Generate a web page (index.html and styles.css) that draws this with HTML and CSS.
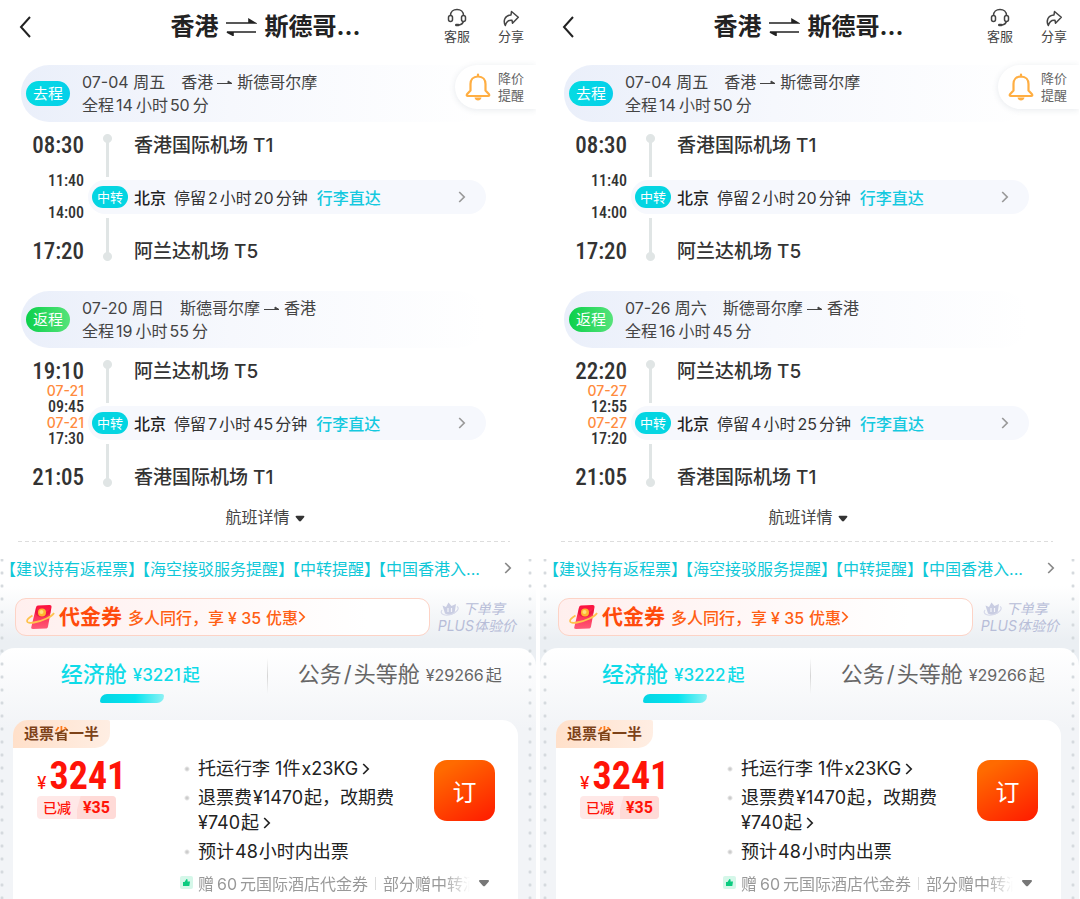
FILE: index.html
```html
<!DOCTYPE html>
<html lang="zh-CN">
<head>
  <meta charset="UTF-8">
  <meta name="viewport" content="width=device-width, initial-scale=1.0">
  <title>香港 - 斯德哥尔摩 往返航班</title>
  <link rel="stylesheet" href="styles.css">
</head>
<body>
  <!-- Shared icons -->
  <svg class="sprite" aria-hidden="true">
    <defs>
      <linearGradient id="packet" x1="0" y1="0" x2="0" y2="1">
        <stop offset="0" stop-color="#fb0f3c"/>
        <stop offset="1" stop-color="#ff5a78"/>
      </linearGradient>
    </defs>
    <symbol id="i-back" viewBox="0 0 12 22"><path d="M11 1 2 11l9 10" fill="none" stroke="#222" stroke-width="2"/></symbol>
    <symbol id="i-swap" viewBox="0 0 32 18"><path d="M1 5h29L24 1.500V5M31 14H2l6 3.300V14" fill="#222" stroke="#222" stroke-width="1.600"/></symbol>
    <symbol id="i-to" viewBox="0 0 16 8"><path d="M0 4.500h15l-4-2.500v2.500" fill="#444" stroke="#444" stroke-width="1"/></symbol>
    <symbol id="i-service" viewBox="0 0 20 19">
      <path d="M3.500 7.500C3.500 3.800 6.300 1.500 10 1.500s6.500 2.300 6.500 6M16.500 13c-.5 2.300-2 3.700-4.500 4" fill="none" stroke="#444" stroke-width="1.500"/>
      <rect x="1.500" y="7.500" width="4" height="6" rx="2" fill="#fff" stroke="#444" stroke-width="1.500"/>
      <rect x="14.500" y="7.500" width="4" height="6" rx="2" fill="#fff" stroke="#444" stroke-width="1.500"/>
      <rect x="8" y="15.800" width="4.500" height="2.400" rx="1.200" fill="#444"/>
    </symbol>
    <symbol id="i-share" viewBox="0 0 18 17"><path d="M9.500 1.500 16.300 7.300 10.500 13.200 10 10.300C6.500 9.800 4.500 11.500 3.300 15.500 1 11 2.500 5.500 9 4.900z" fill="none" stroke="#444" stroke-width="1.500" stroke-linejoin="round"/></symbol>
    <symbol id="i-bell" viewBox="0 0 26 30">
      <path d="M13 2.500v2M13 4.500c-5 0-7.500 3.500-7.500 7.500v6.500L2 22.300c-.6.900-.2 1.700.8 1.700h20.400c1 0 1.400-.8.8-1.700l-3.500-3.800V12c0-4-2.500-7.500-7.500-7.500z" fill="none" stroke="#ffae42" stroke-width="2.200" stroke-linecap="round" stroke-linejoin="round"/>
      <path d="M9.500 25.500h7c-.4 2-1.700 3-3.500 3s-3.100-1-3.500-3z" fill="#ffae42"/>
    </symbol>
    <symbol id="i-more" viewBox="0 0 8 12"><path d="m1.200 1 5 5-5 5" fill="none" stroke="currentColor" stroke-width="1.700"/></symbol>
    <symbol id="i-caret" viewBox="0 0 10 7"><path d="M1.500.8h7c.9 0 1.200.8.6 1.500L6 6c-.6.600-1.400.6-2 0L.9 2.300C.3 1.600.6.800 1.500.8z" fill="currentColor"/></symbol>
    <symbol id="i-coupon" viewBox="0 0 30 26">
      <path d="M12 1.500 23.500 1c1.500 0 2.200.8 2 2.200L22 22.500c-.3 1.400-1 2-2.300 2L7 25c-1.500 0-2.200-.8-1.600-2.200L10 3.500c.4-1.300.8-2 2-2z" fill="url(#packet)"/>
      <path d="M10 3.500c3 8 9 7 15 1L24.500 9C18 15 11 14 9 9z" fill="#d8002d" opacity=".4"/>
      <path d="M6.500 11.500C-1 16-1 20 8 18.500s18-6 20-9.500" fill="none" stroke="#ffc24d" stroke-width="1.800"/>
      <circle cx="16" cy="8.500" r="4" fill="#ffb52e"/>
      <circle cx="15.500" cy="8" r="2" fill="#ffe07a"/>
    </symbol>
    <symbol id="i-crown" viewBox="0 0 22 16">
      <path d="M3.500 4.500 7 6l2.500-4.500 3 3.500L17 3l-1.500 9.500c-3 1.800-7 1.800-9.500 0z" fill="#c9cde2"/>
      <path d="M3 9c-3 4 3 6.500 9 4.500s9-6.500 6-8" fill="none" stroke="#d6d9ea" stroke-width="1.200"/>
      <path d="M9 7v4M12.500 7v4" stroke="#f4f5fa" stroke-width="1.200"/>
    </symbol>
    <symbol id="i-thumb" viewBox="0 0 13 13">
      <rect width="13" height="13" rx="2" fill="#d5f7e9"/>
      <path d="M3 6h1.500L6.500 3c1 0 1.300.8 1 2.500H10L9.300 10H3z" fill="#0ccb80"/>
    </symbol>
  </svg>

  <main class="compare">
    <section class="panel">
      <header class="topbar">
        <button class="back" aria-label="返回"><svg><use href="#i-back"/></svg></button>
        <h1>香港<svg><use href="#i-swap"/></svg>斯德哥...</h1>
        <nav>
          <a href="#"><svg class="service"><use href="#i-service"/></svg>客服</a>
          <a href="#"><svg class="share"><use href="#i-share"/></svg>分享</a>
        </nav>
      </header>
      <button class="alert"><svg><use href="#i-bell"/></svg><span>降价<br>提醒</span></button>

      <article class="leg">
        <div class="leg-head">
          <span class="tag">去程</span>
          <div>
            <p>07-04 周五<span class="route">香港<svg><use href="#i-to"/></svg>斯德哥尔摩</span></p>
            <p>全程<i>14</i>小时<i>50</i>分</p>
          </div>
        </div>
        <div class="stops">
          <time class="from">08:30</time><h2 class="from">香港国际机场 T1</h2>
          <div class="via-times">
            <p><time>11:40</time></p>
            <p><time>14:00</time></p>
          </div>
          <button class="via"><span class="via-tag">中转</span><b>北京</b><span class="stay">停留<i>2</i>小时<i>20</i>分钟</span><em>行李直达</em><svg><use href="#i-more"/></svg></button>
          <time class="to">17:20</time><h2 class="to">阿兰达机场 T5</h2>
          <div class="rail"><span></span><span></span></div>
        </div>
      </article>

      <article class="leg">
        <div class="leg-head">
          <span class="tag green">返程</span>
          <div>
            <p>07-20 周日<span class="route">斯德哥尔摩<svg><use href="#i-to"/></svg>香港</span></p>
            <p>全程<i>19</i>小时<i>55</i>分</p>
          </div>
        </div>
        <div class="stops">
          <time class="from">19:10</time><h2 class="from">阿兰达机场 T5</h2>
          <div class="via-times">
            <p><span>07-21</span><time>09:45</time></p>
            <p><span>07-21</span><time>17:30</time></p>
          </div>
          <button class="via"><span class="via-tag">中转</span><b>北京</b><span class="stay">停留<i>7</i>小时<i>45</i>分钟</span><em>行李直达</em><svg><use href="#i-more"/></svg></button>
          <time class="to">21:05</time><h2 class="to">香港国际机场 T1</h2>
          <div class="rail"><span></span><span></span></div>
        </div>
      </article>

      <button class="detail">航班详情<svg><use href="#i-caret"/></svg></button>

      <div class="fares">
        <a class="notice" href="#"><p><span>【建议持有返程票】</span><span>【海空接驳服务提醒】</span><span>【中转提醒】</span><span>【中国香港入...</span></p><svg><use href="#i-more"/></svg></a>
        <div class="promo">
          <a class="coupon" href="#"><svg class="packet"><use href="#i-coupon"/></svg><strong>代金券</strong><span>多人同行，享<i>¥ 35</i>优惠</span><svg class="more"><use href="#i-more"/></svg></a>
          <p class="plus"><svg><use href="#i-crown"/></svg>下单享<br>PLUS体验价</p>
        </div>
        <div class="cabins">
          <div class="tabs">
            <button class="active">经济舱<small>¥3221<i>起</i></small></button>
            <button>公务<i>/</i>头等舱<small>¥29266<i>起</i></small></button>
          </div>
          <div class="offer">
            <span class="ribbon">退票<span>省</span>一半</span>
            <div class="offer-body">
              <div class="price">
                <p><small>¥</small>3241</p>
                <div class="cut"><span>已减</span><b>¥35</b></div>
              </div>
              <ul>
                <li>托运行李 1件<i>x23KG</i><svg><use href="#i-more"/></svg></li>
                <li>退票费<i>¥1470</i>起，改期费<br>¥740<i>起</i><svg><use href="#i-more"/></svg></li>
                <li>预计<i>48</i>小时内出票</li>
              </ul>
              <button class="book">订</button>
            </div>
            <div class="gift">
              <svg class="thumb"><use href="#i-thumb"/></svg>
              <p>赠<i>60</i>元国际酒店代金券<span class="bar"></span>部分赠中转酒店</p>
              <svg class="caret"><use href="#i-caret"/></svg>
            </div>
          </div>
        </div>
      </div>
    </section>

    <section class="panel">
      <header class="topbar">
        <button class="back" aria-label="返回"><svg><use href="#i-back"/></svg></button>
        <h1>香港<svg><use href="#i-swap"/></svg>斯德哥...</h1>
        <nav>
          <a href="#"><svg class="service"><use href="#i-service"/></svg>客服</a>
          <a href="#"><svg class="share"><use href="#i-share"/></svg>分享</a>
        </nav>
      </header>
      <button class="alert"><svg><use href="#i-bell"/></svg><span>降价<br>提醒</span></button>

      <article class="leg">
        <div class="leg-head">
          <span class="tag">去程</span>
          <div>
            <p>07-04 周五<span class="route">香港<svg><use href="#i-to"/></svg>斯德哥尔摩</span></p>
            <p>全程<i>14</i>小时<i>50</i>分</p>
          </div>
        </div>
        <div class="stops">
          <time class="from">08:30</time><h2 class="from">香港国际机场 T1</h2>
          <div class="via-times">
            <p><time>11:40</time></p>
            <p><time>14:00</time></p>
          </div>
          <button class="via"><span class="via-tag">中转</span><b>北京</b><span class="stay">停留<i>2</i>小时<i>20</i>分钟</span><em>行李直达</em><svg><use href="#i-more"/></svg></button>
          <time class="to">17:20</time><h2 class="to">阿兰达机场 T5</h2>
          <div class="rail"><span></span><span></span></div>
        </div>
      </article>

      <article class="leg">
        <div class="leg-head">
          <span class="tag green">返程</span>
          <div>
            <p>07-26 周六<span class="route">斯德哥尔摩<svg><use href="#i-to"/></svg>香港</span></p>
            <p>全程<i>16</i>小时<i>45</i>分</p>
          </div>
        </div>
        <div class="stops">
          <time class="from">22:20</time><h2 class="from">阿兰达机场 T5</h2>
          <div class="via-times">
            <p><span>07-27</span><time>12:55</time></p>
            <p><span>07-27</span><time>17:20</time></p>
          </div>
          <button class="via"><span class="via-tag">中转</span><b>北京</b><span class="stay">停留<i>4</i>小时<i>25</i>分钟</span><em>行李直达</em><svg><use href="#i-more"/></svg></button>
          <time class="to">21:05</time><h2 class="to">香港国际机场 T1</h2>
          <div class="rail"><span></span><span></span></div>
        </div>
      </article>

      <button class="detail">航班详情<svg><use href="#i-caret"/></svg></button>

      <div class="fares">
        <a class="notice" href="#"><p><span>【建议持有返程票】</span><span>【海空接驳服务提醒】</span><span>【中转提醒】</span><span>【中国香港入...</span></p><svg><use href="#i-more"/></svg></a>
        <div class="promo">
          <a class="coupon" href="#"><svg class="packet"><use href="#i-coupon"/></svg><strong>代金券</strong><span>多人同行，享<i>¥ 35</i>优惠</span><svg class="more"><use href="#i-more"/></svg></a>
          <p class="plus"><svg><use href="#i-crown"/></svg>下单享<br>PLUS体验价</p>
        </div>
        <div class="cabins">
          <div class="tabs">
            <button class="active">经济舱<small>¥3222<i>起</i></small></button>
            <button>公务<i>/</i>头等舱<small>¥29266<i>起</i></small></button>
          </div>
          <div class="offer">
            <span class="ribbon">退票<span>省</span>一半</span>
            <div class="offer-body">
              <div class="price">
                <p><small>¥</small>3241</p>
                <div class="cut"><span>已减</span><b>¥35</b></div>
              </div>
              <ul>
                <li>托运行李 1件<i>x23KG</i><svg><use href="#i-more"/></svg></li>
                <li>退票费<i>¥1470</i>起，改期费<br>¥740<i>起</i><svg><use href="#i-more"/></svg></li>
                <li>预计<i>48</i>小时内出票</li>
              </ul>
              <button class="book">订</button>
            </div>
            <div class="gift">
              <svg class="thumb"><use href="#i-thumb"/></svg>
              <p>赠<i>60</i>元国际酒店代金券<span class="bar"></span>部分赠中转酒店</p>
              <svg class="caret"><use href="#i-caret"/></svg>
            </div>
          </div>
        </div>
      </div>
    </section>
  </main>
</body>
</html>
```
FILE: styles.css
```css
* {
  box-sizing: border-box;
}

body {
  margin: 0;
  background: #fff;
  color: #333;
  font-family: Inter, "Noto Sans CJK SC", sans-serif;
  font-size: 16px;
  overflow-x: hidden;
}

h1, h2, p, ul {
  margin: 0;
  padding: 0;
}

button {
  border: none;
  background: none;
  padding: 0;
  font: inherit;
  color: inherit;
  cursor: pointer;
}

a {
  color: inherit;
  text-decoration: none;
}

em {
  font-style: normal;
}

/* small gap between digits and Chinese text */
i {
  font-style: normal;
  margin: 0 2px;
}

.sprite {
  position: absolute;
  width: 0;
  height: 0;
}

.compare {
  display: grid;
  grid-template-columns: 1fr 1fr;
  gap: 4px;
  margin: 0 1px 0 -3px;
  min-height: 100vh;
}

.panel {
  position: relative;
  display: flex;
  flex-direction: column;
  min-width: 0;
  overflow: hidden;
}

/* Top bar */
.topbar {
  display: flex;
  align-items: center;
  height: 65px;
  padding: 0 12px 12px 22px;
}

.back svg {
  display: block;
  width: 12px;
  height: 22px;
}

.topbar h1 {
  flex: 1;
  display: flex;
  align-items: center;
  justify-content: center;
  padding-left: 56px;
  font-size: 24px;
  line-height: 36px;
  color: #222;
}

.topbar h1 svg {
  width: 32px;
  height: 18px;
  margin: 0 7px;
}

.topbar nav {
  display: flex;
  gap: 28px;
}

.topbar nav a {
  display: flex;
  flex-direction: column;
  align-items: center;
  font-size: 13px;
  line-height: 18px;
  color: #444;
}

.service {
  width: 20px;
  height: 19px;
}

.share {
  width: 18px;
  height: 17px;
  margin-top: 2px;
}

.alert {
  position: absolute;
  top: 65px;
  right: 0;
  display: flex;
  align-items: center;
  gap: 7px;
  height: 44px;
  padding: 0 12px 0 10px;
  border-radius: 22px 0 0 22px;
  background: #fff;
  box-shadow: 0 1px 6px rgba(60, 80, 110, 0.12);
  font-size: 13px;
  line-height: 17px;
  color: #666;
}

.alert svg {
  width: 26px;
  height: 30px;
}

/* Flight legs */
.leg {
  margin-bottom: 15px;
}

.leg + .leg {
  margin-bottom: 0;
}

.leg-head {
  display: flex;
  align-items: center;
  gap: 12px;
  height: 57px;
  margin: 0 50px 0 24px;
  padding-left: 5px;
  border-radius: 28px;
  background: linear-gradient(90deg, #eaeffa, #f6f8fd 45%, #fff);
  line-height: 23px;
  color: #444;
}

.leg-head i {
  margin: 0 3px 0 2px;
}

.tag {
  padding: 0 7px;
  border-radius: 13px;
  background: linear-gradient(90deg, #04dbe2, #06cfea);
  color: #fff;
  font-size: 15px;
  line-height: 25px;
}

.tag.green {
  background: linear-gradient(90deg, #0cd04b, #56e37a);
}

.route {
  margin-left: 16px;
}

.route svg {
  width: 16px;
  height: 8px;
  margin: 0 4px;
  vertical-align: 1px;
}

.stops {
  display: grid;
  grid-template-columns: 87px 47px 1fr;
  grid-template-rows: 46px 58px 50px;
  align-items: center;
}

time {
  grid-column: 1;
  text-align: right;
  font-family: "Roboto Condensed", Roboto, sans-serif;
  font-size: 23px;
  font-weight: 500;
}

.stops h2 {
  grid-column: 3;
  padding: 2px 0 0 3px;
  font-size: 19px;
  font-weight: 500;
  line-height: 24px;
}

.from {
  grid-row: 1;
}

.to {
  grid-row: 3;
}

.via-times {
  grid-area: 2 / 1;
  align-self: start;
  margin: -11px 0;
}

.via-times p {
  display: flex;
  flex-direction: column;
  justify-content: flex-end;
  height: 32px;
  text-align: right;
  line-height: 16px;
}

.via-times span {
  color: #ff8b3d;
  font-size: 14px;
  font-weight: 500;
  line-height: 16px;
}

.via-times time {
  font-size: 16px;
}

.rail {
  grid-area: 1 / 2 / 4 / 3;
  align-self: stretch;
  display: flex;
  flex-direction: column;
  justify-content: space-between;
  align-items: center;
  padding: 12px 0 15px;
}

.rail span {
  width: 9px;
  height: 43px;
  background:
    radial-gradient(circle, #e0e5e5 4px, transparent 5px) top / 9px 9px no-repeat,
    linear-gradient(#e0e5e5, #e0e5e5) bottom / 3px 39px no-repeat;
}

.rail span:last-child {
  background-position: bottom, top;
}

.via {
  grid-area: 2 / 2 / 3 / 4;
  display: flex;
  align-items: center;
  height: 34px;
  margin: 0 50px 0 4px;
  padding: 0 20px 0 4px;
  border-radius: 17px;
  background: #f6f8fd;
}

.via-tag {
  padding: 0 5px;
  border-radius: 11px;
  background: #04d5e2;
  color: #fff;
  font-size: 13px;
  line-height: 22px;
}

.via b {
  margin: 0 8px 0 6px;
  font-weight: 500;
  color: #222;
}

.via em {
  flex: 1;
  margin-left: 9px;
  text-align: left;
  font-weight: 500;
  color: #14c9df;
}

.via svg {
  width: 8px;
  height: 12px;
  color: #999;
}

.detail {
  align-self: center;
  height: 30px;
  padding: 0 3px 2px 0;
  color: #444;
}

.detail svg {
  width: 10px;
  height: 7px;
  margin-left: 5px;
  vertical-align: 1px;
  color: #333;
}

/* Fares */
.fares {
  position: relative;
  flex: 1;
  display: flex;
  flex-direction: column;
  margin-top: 9px;
  background: linear-gradient(#fff 45px, #ebeff3 100px);
}

.fares::before {
  content: "";
  height: 1px;
  margin: 0 26px 0 21px;
  background: repeating-linear-gradient(90deg, #ddd 0 4px, transparent 4px 7px);
}

/* perforated edges */
.fares::after {
  content: "";
  position: absolute;
  inset: 18px 4px 0 3px;
  background:
    radial-gradient(circle, #d3d8dc 1px, transparent 2px) left / 4px 13px repeat-y,
    radial-gradient(circle, #d3d8dc 1px, transparent 2px) right / 4px 13px repeat-y;
  pointer-events: none;
}

.notice {
  display: flex;
  align-items: center;
  justify-content: space-between;
  height: 52px;
  padding: 0 24px 0 11px;
  color: #10c8d8;
}

.notice p {
  white-space: nowrap;
  font-feature-settings: "halt";
}

.notice span {
  margin-right: 6px;
}

.notice svg {
  width: 8px;
  height: 12px;
  color: #888;
}

.promo {
  display: flex;
  align-items: center;
  gap: 8px;
  margin: 4px 20px 12px 18px;
}

.coupon {
  flex: 1;
  display: flex;
  align-items: center;
  height: 38px;
  padding-left: 10px;
  border: 1px solid #fdd3c6;
  border-radius: 11px;
  background: linear-gradient(90deg, #ffefee, #fff 85%);
  font-weight: 500;
  color: #ff5f14;
}

.packet {
  width: 30px;
  height: 26px;
}

.coupon strong {
  margin: 0 6px 0 3px;
  font-size: 21px;
  line-height: 30px;
  color: #ff4b0c;
}

.coupon i {
  margin: 0 5px 0 4px;
}

.coupon .more {
  width: 8px;
  height: 14px;
}

.plus {
  font-size: 14px;
  font-style: italic;
  line-height: 17px;
  white-space: nowrap;
  color: #b7bdd8;
}

.plus svg {
  width: 22px;
  height: 16px;
  margin: 0 2px 0 1px;
  vertical-align: -3px;
}

.cabins {
  flex: 1;
  display: flex;
  flex-direction: column;
  border-radius: 18px 18px 0 0;
  background: linear-gradient(#fff, #f2f4f7 80px);
}

.tabs {
  display: grid;
  grid-template-columns: 1fr 1fr;
  height: 72px;
}

.tabs button {
  position: relative;
  height: 55px;
  padding: 0 3px 8px 0;
  font-size: 22px;
  white-space: nowrap;
  color: #666;
}

.tabs button + button::before {
  content: "";
  position: absolute;
  left: 0;
  top: 10px;
  width: 1px;
  height: 36px;
  background: linear-gradient(transparent, #d5d5d5, transparent);
}

.tabs small {
  margin-left: 6px;
  font-size: 16px;
  vertical-align: 1px;
}

.tabs small i {
  margin-right: 0;
}

.tabs .active {
  font-weight: 500;
  color: #0edbe8;
}

.active small {
  font-size: 17px;
}

.tabs .active::after {
  content: "";
  position: absolute;
  left: 50%;
  bottom: 0;
  width: 64px;
  height: 9px;
  margin-left: -32px;
  border-radius: 7px 2px 7px 2px;
  background: linear-gradient(90deg, #04d5e4, #06e4ef 55%, #8df1f4);
}

.offer {
  flex: 1;
  margin: 0 18px 0 16px;
  border-radius: 16px 16px 0 0;
  background: #fff;
}

.ribbon {
  display: block;
  width: fit-content;
  height: 28px;
  padding: 0 11px;
  border-radius: 15px 2px 15px 0;
  background: linear-gradient(90deg, #ffe0ca, #ffeee3);
  font-size: 15px;
  font-weight: bold;
  line-height: 28px;
  color: #7d4218;
}

.ribbon span {
  background: linear-gradient(165deg, #ff7a1a 34%, #7d4218 40%);
  background-clip: text;
  color: transparent;
}

.offer-body {
  display: flex;
  align-items: flex-start;
  padding: 8px 23px 0 24px;
}

.price {
  width: 147px;
  color: #ff1408;
}

.price p {
  font-family: "Roboto Condensed", Roboto, sans-serif;
  font-size: 38px;
  font-weight: bold;
  line-height: 40px;
}

.price small {
  margin-right: 3px;
  font-family: Inter, sans-serif;
  font-size: 17px;
  font-weight: 500;
  line-height: 1;
}

.cut {
  display: flex;
  width: fit-content;
  border-radius: 4px;
  overflow: hidden;
  background: #ffe8e7;
  font-size: 14px;
  line-height: 23px;
}

.cut span {
  padding: 0 6px;
  font-weight: 500;
}

.cut b {
  padding: 0 6px;
  background: linear-gradient(105deg, #ffe8e7 3px, #ffdad7 4px);
  font-family: Roboto, sans-serif;
  font-size: 16px;
}

.offer-body ul {
  flex: 1;
  list-style: none;
  font-size: 18px;
  line-height: 25px;
  white-space: nowrap;
  color: #222;
}

.offer-body li {
  margin-bottom: 4px;
  background: radial-gradient(circle, #ccc 1px, transparent 3px) 0 10px / 6px 6px no-repeat;
  padding-left: 14px;
}

.offer-body li i {
  margin: 0 1px;
}

.offer-body li svg {
  width: 8px;
  height: 12px;
  margin-left: 3px;
}

.book {
  width: 61px;
  height: 61px;
  margin-top: 4px;
  border-radius: 13px;
  background: linear-gradient(150deg, #ff6a00 15%, #ff1a00);
  color: #fff;
  font-size: 24px;
}

.gift {
  display: flex;
  align-items: center;
  height: 29px;
  padding: 0 28px 0 167px;
  color: #999;
}

.thumb {
  flex: none;
  width: 13px;
  height: 13px;
}

.gift p {
  flex: 1;
  margin: 0 8px 0 5px;
  overflow: hidden;
  white-space: nowrap;
  mask-image: linear-gradient(90deg, #000 90%, transparent);
}

.gift i {
  margin: 0 3px;
}

.bar {
  display: inline-block;
  width: 1px;
  height: 13px;
  margin: 0 7px;
  background: #ddd;
}

.gift .caret {
  flex: none;
  width: 12px;
  height: 8px;
  color: #777;
}
```
